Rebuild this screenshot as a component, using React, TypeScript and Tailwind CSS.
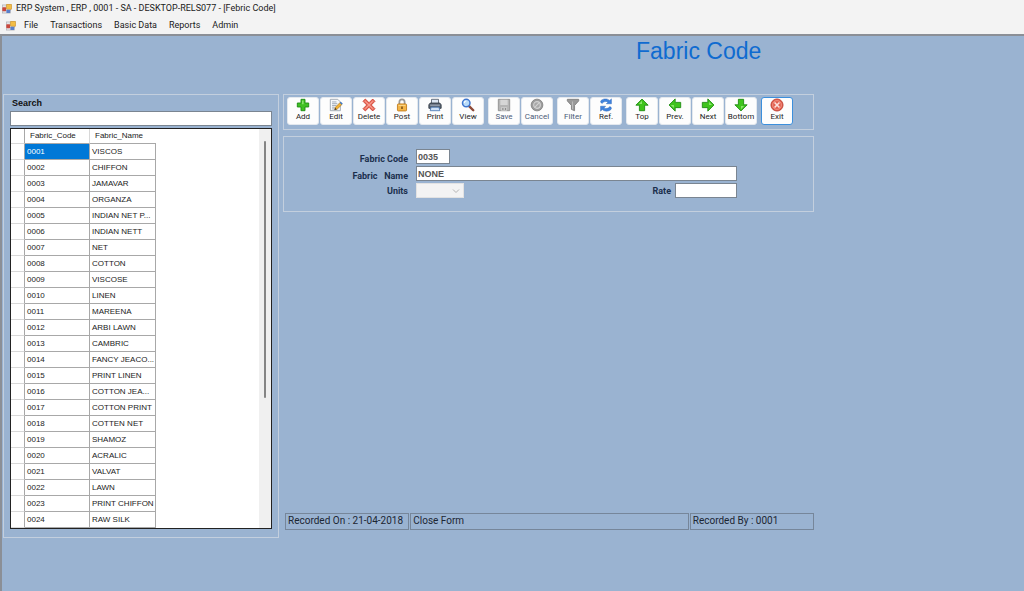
import React, { useState } from 'react';

type IconProps = { children: React.ReactNode };

const Icon: React.FC<IconProps> = ({ children }) => (
  <svg viewBox="0 0 16 16" className="size-3.5" aria-hidden="true">
    {children}
  </svg>
);

const AppIcon: React.FC = () => (
  <svg viewBox="0 0 16 16" className="size-2.5 shrink-0" aria-hidden="true">
    <rect x="0.5" y="1.5" width="13" height="13" fill="#e4e4e8" stroke="#a9a9b0" />
    <rect x="0.5" y="5" width="6" height="6.5" rx="1" fill="#c8473d" />
    <rect x="7" y="0.5" width="8.5" height="8" rx="1" fill="#f3bd45" stroke="#b97a14" strokeWidth="0.8" />
    <rect x="7" y="9" width="6" height="5.5" rx="1" fill="#5a7fc9" />
  </svg>
);

const arrow = 'M8 1.2 15 8.2H11V14.5H5V8.2H1Z';

const Arrow: React.FC<{ turn: number }> = ({ turn }) => (
  <Icon>
    <path d={arrow} transform={`rotate(${turn} 8 8)`} fill="#3fc41c" stroke="#1d8a10" strokeWidth="1" strokeLinejoin="round" />
    <path d="M8 3.2 4.5 6.8H8Z" transform={`rotate(${turn} 8 8)`} fill="#8be66c" />
  </Icon>
);

const icons = {
  add: (
    <Icon>
      <path d="M5.7 1.5h4.6v4.2h4.2v4.6h-4.2v4.2H5.7v-4.2H1.5V5.7h4.2Z" fill="#3fc023" stroke="#1c8a12" strokeLinejoin="round" />
      <path d="M7 2.8h1.6v4.3H3V7h4Z" fill="#92e877" />
    </Icon>
  ),
  edit: (
    <Icon>
      <path d="M1.5 1.5h8.5l3 3v10H1.5Z" fill="#f6f8fb" stroke="#9aa3ae" />
      <path d="M3.5 4.5h5M3.5 6.5h6M3.5 8.5h5M3.5 10.5h3M3.5 12.5h3" stroke="#8a97a8" strokeWidth="0.9" />
      <path d="M6.5 13.5 7.3 10.6 12.8 5 15 7.2 9.4 12.7Z" fill="#f2b233" stroke="#b0761a" strokeWidth="0.8" />
      <path d="M12.3 5.5 13.5 4.2 15.7 6.4 14.5 7.7Z" fill="#3c78c8" />
      <path d="M6.3 13.8 7.1 11.2 8.9 13Z" fill="#3a3a3a" />
    </Icon>
  ),
  remove: (
    <Icon>
      <path d="M3.8 1.2 8 5.4l4.2-4.2 2.6 2.6L10.6 8l4.2 4.2-2.6 2.6L8 10.6l-4.2 4.2-2.6-2.6L5.4 8 1.2 3.8Z" fill="#ee7565" stroke="#c9392c" strokeLinejoin="round" />
      <path d="M3.8 3.8 12.2 12.2M12.2 3.8 3.8 12.2" stroke="#f6a497" />
    </Icon>
  ),
  post: (
    <Icon>
      <path d="M5 7.5V4.6a3 3 0 0 1 6 0v2.9" fill="none" stroke="#9a9a9a" strokeWidth="2" />
      <rect x="2.8" y="6.8" width="10.4" height="8" rx="1" fill="#f4b548" stroke="#c07c1c" />
      <path d="M4 8.5h8" stroke="#fbdc93" />
      <path d="M7.2 9.8h1.6v2.8H7.2Z" fill="#6b4410" />
    </Icon>
  ),
  print: (
    <Icon>
      <path d="M4 1.5h8v5H4Z" fill="#dfe8f4" stroke="#56606e" />
      <path d="M2.5 5.8h11l1.5 2v4H1v-4Z" fill="#5b6573" stroke="#2f3742" strokeLinejoin="round" />
      <path d="M2.5 8.2h11" stroke="#b5bfcc" />
      <path d="M3.5 10.5h9l1 4h-11Z" fill="#cfe2f8" stroke="#4b79b5" strokeLinejoin="round" />
    </Icon>
  ),
  view: (
    <Icon>
      <path d="m9.2 9.2 4.8 4.8" stroke="#8d4a38" strokeWidth="2.8" strokeLinecap="round" />
      <circle cx="6" cy="5.8" r="4.3" fill="#b9dcfa" stroke="#3f76cf" strokeWidth="1.7" />
      <path d="M3.8 5.6A2.3 2.3 0 0 1 6 3.5" fill="none" stroke="#fff" strokeWidth="1.2" />
    </Icon>
  ),
  save: (
    <Icon>
      <path d="M1.5 1.5h13v13h-13Z" fill="#b5b5b5" stroke="#8e8e8e" strokeLinejoin="round" />
      <path d="M3.8 2h8.4v6H3.8Z" fill="#d6d6d6" />
      <path d="M4.5 10.5h7v4h-7Z" fill="#cdcdcd" />
      <path d="M6 11.5h1.4v2.2H6ZM9 11.5h1.4v2.2H9Z" fill="#8d8d8d" />
    </Icon>
  ),
  cancel: (
    <Icon>
      <circle cx="8" cy="8" r="6.7" fill="#9c9c9c" stroke="#858585" />
      <circle cx="8" cy="8" r="3.8" fill="#a8a8a8" stroke="#d2d2d2" strokeWidth="1.3" />
      <path d="m10.7 5.3-5.4 5.4" stroke="#d2d2d2" strokeWidth="1.3" />
    </Icon>
  ),
  filter: (
    <Icon>
      <path d="M1.5 1.5h13v1.8L9.8 8.5v6L6.2 13V8.5L1.5 3.3Z" fill="#999" stroke="#7e7e7e" strokeLinejoin="round" />
      <path d="M7.5 4v9" stroke="#c4c4c4" />
    </Icon>
  ),
  refresh: (
    <Icon>
      <path d="M14.2 6.6H8.4l2-2C8 3.4 5.2 4 3.6 6.2 1.6 5.4 1.4 4 2.4 2.8 5 .4 9.6.4 12.2 2.8l2-1.8Z" fill="#3f83de" stroke="#2560b4" strokeWidth="0.5" />
      <path d="M1.8 9.4h5.8l-2 2c2.4 1.2 5.2.6 6.8-1.6 2 .8 2.2 2.2 1.2 3.4-2.6 2.4-7.2 2.4-9.8 0l-2 1.8Z" fill="#3f83de" stroke="#2560b4" strokeWidth="0.5" />
    </Icon>
  ),
  top: <Arrow turn={0} />,
  prev: <Arrow turn={270} />,
  next: <Arrow turn={90} />,
  bottom: <Arrow turn={180} />,
  exit: (
    <Icon>
      <circle cx="8" cy="8" r="6.9" fill="#e2604f" stroke="#bb3a2d" />
      <circle cx="8" cy="8" r="5" fill="none" stroke="#f3a396" strokeWidth="0.8" />
      <path d="m5.2 5.2 5.6 5.6M10.8 5.2l-5.6 5.6" stroke="#fbe3df" strokeWidth="1.8" />
    </Icon>
  ),
};

type Tool = { label: string; icon: keyof typeof icons; disabled?: boolean; focused?: boolean };

const toolGroups: Tool[][] = [
  [
    { label: 'Add', icon: 'add' },
    { label: 'Edit', icon: 'edit' },
    { label: 'Delete', icon: 'remove' },
    { label: 'Post', icon: 'post' },
    { label: 'Print', icon: 'print' },
    { label: 'View', icon: 'view' },
  ],
  [
    { label: 'Save', icon: 'save', disabled: true },
    { label: 'Cancel', icon: 'cancel', disabled: true },
  ],
  [
    { label: 'Filter', icon: 'filter', disabled: true },
    { label: 'Ref.', icon: 'refresh' },
  ],
  [
    { label: 'Top', icon: 'top' },
    { label: 'Prev.', icon: 'prev' },
    { label: 'Next', icon: 'next' },
    { label: 'Bottom', icon: 'bottom' },
  ],
  [{ label: 'Exit', icon: 'exit', focused: true }],
];

const menuItems = ['File', 'Transactions', 'Basic Data', 'Reports', 'Admin'];

const fabrics = [
  ['0001', 'VISCOS'],
  ['0002', 'CHIFFON'],
  ['0003', 'JAMAVAR'],
  ['0004', 'ORGANZA'],
  ['0005', 'INDIAN NET P...'],
  ['0006', 'INDIAN NETT'],
  ['0007', 'NET'],
  ['0008', 'COTTON'],
  ['0009', 'VISCOSE'],
  ['0010', 'LINEN'],
  ['0011', 'MAREENA'],
  ['0012', 'ARBI LAWN'],
  ['0013', 'CAMBRIC'],
  ['0014', 'FANCY JEACO...'],
  ['0015', 'PRINT LINEN'],
  ['0016', 'COTTON JEA...'],
  ['0017', 'COTTON PRINT'],
  ['0018', 'COTTEN NET'],
  ['0019', 'SHAMOZ'],
  ['0020', 'ACRALIC'],
  ['0021', 'VALVAT'],
  ['0022', 'LAWN'],
  ['0023', 'PRINT CHIFFON'],
  ['0024', 'RAW SILK'],
];

const ToolButton: React.FC<{ tool: Tool }> = ({ tool }) => (
  <button
    type="button"
    disabled={tool.disabled}
    className={`flex h-7 w-8 flex-col items-center rounded-[3px] border text-[8px] leading-[9px] ${
      tool.focused ? 'border-[#3c8fdc] bg-[#fdfdfd]' : 'border-[#e3e8ee] bg-[#fdfdfd]'
    } ${tool.disabled ? 'text-[#4a5b78]' : 'text-[#1c1c1c]'}`}
  >
    {icons[tool.icon]}
    {tool.label}
  </button>
);

const SearchPanel: React.FC = () => {
  const [selected, setSelected] = useState<string>('0001');

  return (
    <section className="flex flex-col border border-[#c3cfde] px-1.5 pb-2">
      <label htmlFor="search" className="pl-0.5 text-[9px] leading-4 font-bold text-[#111]">
        Search
      </label>
      <input id="search" type="text" className="h-[15px] w-full border border-[#7a8591] bg-white px-1 text-[9px] outline-none" />

      <div className="mt-0.5 flex h-[401px] justify-between overflow-hidden border border-[#222] bg-white">
        <table className="w-[145px] table-fixed border-separate border-spacing-0 self-start text-[8px] leading-[15px] text-[#222]">
          <thead>
            <tr className="h-[15px]">
              <th className="w-[14px] border-r border-b border-r-[#a8a8a8] border-b-[#d8d8d8] p-0" />
              <th className="w-[65px] border-r border-b border-r-[#d8d8d8] border-b-[#a8a8a8] p-0 pl-[5px] text-left leading-[14px] font-normal">
                Fabric_Code
              </th>
              <th className="w-[66px] border-b border-[#a8a8a8] p-0 pl-[5px] text-left leading-[14px] font-normal">Fabric_Name</th>
            </tr>
          </thead>
          <tbody>
            {fabrics.map(([code, name]) => (
              <tr key={code} className="h-4" onClick={() => setSelected(code)}>
                <td className="border-r border-b border-r-[#a8a8a8] border-b-[#d8d8d8] p-0" />
                <td
                  className={`border-r border-b border-[#a8a8a8] p-0 pl-0.5 ${
                    code === selected ? 'bg-[#0078d7] text-white' : ''
                  }`}
                >
                  {code}
                </td>
                <td className="border-r border-b border-[#a8a8a8] p-0 pl-0.5 whitespace-nowrap">{name}</td>
              </tr>
            ))}
          </tbody>
        </table>

        {/* scroll track */}
        <div className="w-3 bg-[#f0f0f0] pt-3">
          <div className="mx-auto h-[257px] w-0.5 rounded bg-[#858585]" />
        </div>
      </div>
    </section>
  );
};

const fieldClass = 'h-[15px] border border-[#7a8591] bg-white pl-px text-[9px] leading-[13px] font-bold text-[#555] outline-none';

const FabricForm: React.FC = () => (
  <form className="mt-1.5 grid grid-cols-[124fr_321fr_68fr] gap-x-2 gap-y-0.5 border border-[#c3cfde] pt-3 pb-[11px] font-[Roboto,sans-serif] text-[9px] font-bold text-[#1b2f4d]">
    <label htmlFor="code" className="h-[15px] pt-[5px] text-right leading-[10px]">
      Fabric Code
    </label>
    <input id="code" type="text" defaultValue="0035" className={`${fieldClass} w-[34px] font-['Liberation_Sans',sans-serif]`} />

    <label htmlFor="name" className="col-start-1 h-[15px] pt-[5px] text-right leading-[10px] whitespace-pre">
      {'Fabric   Name'}
    </label>
    <input id="name" type="text" defaultValue="NONE" className={`${fieldClass} w-full font-['Liberation_Sans',sans-serif]`} />

    <label htmlFor="units" className="col-start-1 text-right leading-[17px]">
      Units
    </label>
    <div className="flex h-[15px] justify-between">
      <div className="relative">
        <select id="units" disabled className="block h-[15px] w-12 appearance-none border border-[#e2e2e2] bg-[#f3f3f3]">
          <option></option>
        </select>
        <svg viewBox="0 0 8 8" className="pointer-events-none absolute top-1 right-1 size-2" aria-hidden="true">
          <path d="m1 2.5 3 3 3-3" fill="none" stroke="#b4b4b4" />
        </svg>
      </div>
      <div className="flex gap-1">
        <label htmlFor="rate" className="leading-[17px]">
          Rate
        </label>
        <input id="rate" type="text" className={`${fieldClass} w-[62px]`} />
      </div>
    </div>
  </form>
);

const App: React.FC = () => {
  return (
    <div className="flex min-h-screen flex-col bg-[#9ab3d1] font-['Liberation_Sans',Arial,sans-serif]">
      <header className="bg-[#f3f3f3] font-[Roboto,sans-serif] text-[9px] text-[#1a1a1a]">
        <div className="flex h-[17px] items-center gap-1 pl-0.5">
          <AppIcon />
          <h1>ERP System , ERP , 0001 - SA - DESKTOP-RELS077 - [Febric Code]</h1>
        </div>
        <nav className="flex h-[17px] items-center pl-1.5">
          <AppIcon />
          <div className="flex gap-3 pl-2">
            {menuItems.map((item) => (
              <button key={item} type="button">
                {item}
              </button>
            ))}
          </div>
        </nav>
      </header>

      <main className="flex-1 border-t-2 border-l-2 border-[#8b8f96] pl-px">
        <h2 className="h-[58px] pt-px pl-[62%] text-[23px] leading-7 text-[#0f6bd0]">Fabric Code</h2>

        <div className="grid grid-cols-[276fr_531fr_206fr] gap-1">
          <SearchPanel />

          <div className="flex flex-col">
            <div role="toolbar" className="flex gap-1 border border-[#c3cfde] pt-0.5 pr-2 pb-1 pl-[3px] font-[Roboto,sans-serif]">
              {toolGroups.map((group) => (
                <div key={group[0].label} className="flex gap-px">
                  {group.map((tool) => (
                    <ToolButton key={tool.label} tool={tool} />
                  ))}
                </div>
              ))}
            </div>

            <FabricForm />

            <footer className="mt-auto mb-2 grid grid-cols-[124fr_278fr_124fr] gap-px pl-0.5 font-[Roboto,sans-serif] text-[10px] leading-[14px] text-[#1c2633]">
              <div className="h-[17px] border border-[#76869a] pl-0.5">Recorded On : 21-04-2018</div>
              <div className="h-[17px] border border-[#76869a] pl-0.5">Close Form</div>
              <div className="h-[17px] border border-[#76869a] pl-0.5">Recorded By : 0001</div>
            </footer>
          </div>
        </div>
      </main>
    </div>
  );
};

export default App;
